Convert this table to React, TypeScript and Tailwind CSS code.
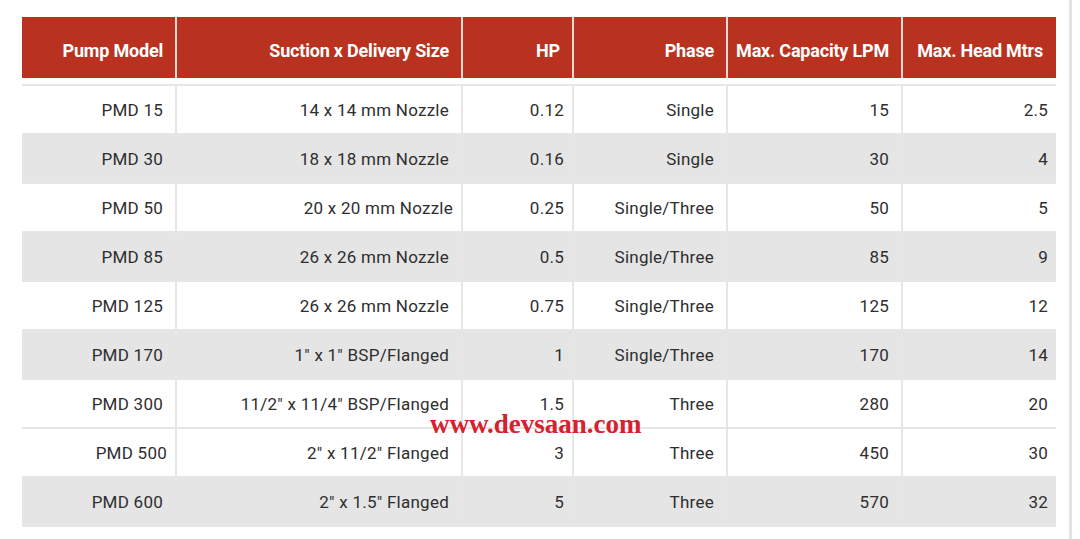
const rows: string[][] = [
  ["PMD 15", "14 x 14 mm Nozzle", "0.12", "Single", "15", "2.5"],
  ["PMD 30", "18 x 18 mm Nozzle", "0.16", "Single", "30", "4"],
  ["PMD 50", "20 x 20 mm Nozzle", "0.25", "Single/Three", "50", "5"],
  ["PMD 85", "26 x 26 mm Nozzle", "0.5", "Single/Three", "85", "9"],
  ["PMD 125", "26 x 26 mm Nozzle", "0.75", "Single/Three", "125", "12"],
  ["PMD 170", "1\" x 1\" BSP/Flanged", "1", "Single/Three", "170", "14"],
  ["PMD 300", "11/2\" x 11/4\" BSP/Flanged", "1.5", "Three", "280", "20"],
  ["PMD 500", "2\" x 11/2\" Flanged", "3", "Three", "450", "30"],
  ["PMD 600", "2\" x 1.5\" Flanged", "5", "Three", "570", "32"],
];

const headers = [
  "Pump Model",
  "Suction x Delivery Size",
  "HP",
  "Phase",
  "Max. Capacity LPM",
  "Max. Head Mtrs",
];

const widths = ["w-[154px]", "w-[286px]", "w-[111px]", "w-[154px]", "w-[175px]", "w-[154px]"];

// rows 0..6 stripe normally, the last two are both white then grey
const greyRows = [1, 3, 5, 8];

export default function App() {
  return (
    <div
      className="relative w-[1080px] h-[539px] bg-white overflow-hidden"
      style={{ fontFamily: "Roboto, 'Noto Sans', sans-serif" }}
    >
      <div className="h-full w-[1072px] border-r-[3px] border-[#e3e3e3] pt-[17px] pl-[22px]">
        <table className="table-fixed border-collapse w-[1034px]">
          <colgroup>
            {widths.map((w, i) => (
              <col key={i} className={w} />
            ))}
          </colgroup>
          <thead>
            <tr className="h-[61px] bg-[#b8321f]">
              {headers.map((h, i) => (
                <th
                  key={h}
                  className={`text-right align-middle pt-[5px] text-white font-bold text-[18px] tracking-[-0.2px] border-[#f3d9d3] ${
                    i > 0 ? "border-l-2" : ""
                  } ${i === 5 ? "pr-[13px]" : "pr-[12px]"}`}
                >
                  {h}
                </th>
              ))}
            </tr>
            <tr className="h-[7px]">
              <td colSpan={6} className="border-b-2 border-[#e6e6e6]" />
            </tr>
          </thead>
          <tbody>
            {rows.map((r, ri) => (
              <tr
                key={ri}
                className={`h-[49px] ${greyRows.includes(ri) ? "bg-[#e5e5e5]" : "bg-white"}`}
              >
                {r.map((c, ci) => (
                  <td
                    key={ci}
                    className={`text-right align-middle pt-[2px] text-[17px] tracking-[0.25px] text-[#2e2e2e] border-b-2 border-[#e6e6e6] ${
                      ci > 0 ? "border-l-2" : ""
                    } ${
                      (ri === 2 && ci === 1) || (ri === 7 && ci === 0)
                        ? "pr-[8px]"
                        : ci === 2 || ci === 5
                        ? "pr-[8px]"
                        : "pr-[12px]"
                    }`}
                  >
                    {c}
                  </td>
                ))}
              </tr>
            ))}
          </tbody>
        </table>
      </div>
      <div
        className="absolute left-[430px] top-[411px] text-[27px] font-bold text-[#d8202f] leading-none"
        style={{ fontFamily: "'Liberation Serif', 'Times New Roman', serif" }}
      >
        www.devsaan.com
      </div>
    </div>
  );
}
